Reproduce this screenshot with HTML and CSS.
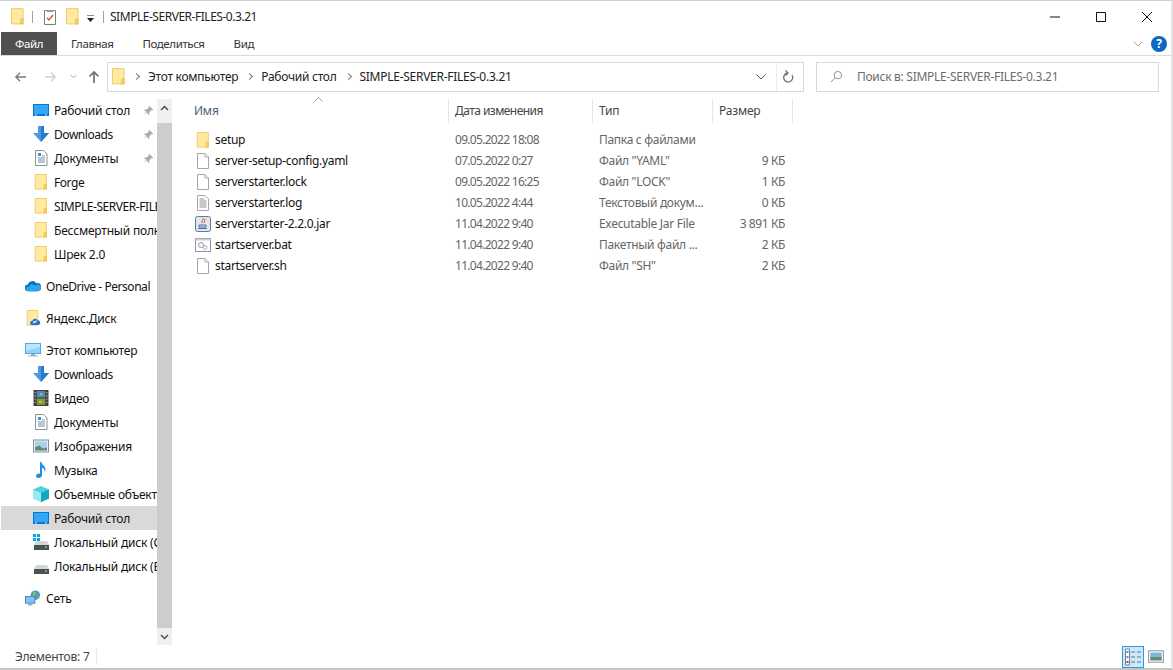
FILE: index.html
```html
<!DOCTYPE html>
<html>
    <head>
        <title>SIMPLE-SERVER-FILES-0.3.21</title>
        <meta charset="UTF-8">
        <link rel="stylesheet" href="styles.css">
    </head>
    <body>
        <svg class="defs" width="0" height="0">
            <symbol id="folder" viewBox="0 0 14 18">
                <path d="M.5.5h12.500v16.500H.5z" fill="#ffe9a3" stroke="#eec95c"/>
                <path d="M10.500 11.500h2.500v5.500h-2.500z" fill="#ffd766" stroke="#e8bd4e"/>
            </symbol>
            <symbol id="desktop" viewBox="0 0 16 12">
                <rect width="16" height="12" fill="#0078d7"/>
                <rect x="1" y="1" width="14" height="9" fill="#36a6f3"/>
                <rect x="2" y="10.500" width="2" height="1" fill="#d5ecfc"/>
                <rect x="12" y="10.500" width="2" height="1" fill="#d5ecfc"/>
            </symbol>
            <symbol id="down" viewBox="0 0 16 16">
                <path d="M5 0h6v7h5l-8 9-8-9h5z" fill="#4a9ae6"/>
                <path d="M8 0h3v7h5l-8 9z" fill="#2a78c8"/>
            </symbol>
            <symbol id="docs" viewBox="0 0 14 16">
                <path d="M1.500.5h8l3.500 3.500v11.500H1.500z" fill="#fff" stroke="#8a9096"/>
                <path d="M4 3h3v3H4z" fill="#3a8fd8"/>
                <path d="M8 6h3M4 8h7M4 10h7M4 12h7" stroke="#6f8fa8"/>
            </symbol>
            <symbol id="pin" viewBox="0 0 12 12">
                <path d="M7 1l4 4-1 1-1-.3L7 8v2L6 11 4 8 1 11l2.500-4L1 6l1-1h2l2.300-2.200L6 2z" fill="#a6acb3"/>
            </symbol>
            <symbol id="cloud" viewBox="0 0 17 11">
                <path d="M3.500 11A3.500 3.500 0 0 1 3 4a5 5 0 0 1 9-1.500A4 4 0 0 1 14 11z" fill="#0f6cbd"/>
                <path d="M3 11a2.500 2.500 0 0 1 1-5 4 4 0 0 1 7-.5A3 3 0 0 1 16.500 9 3 3 0 0 1 14 11z" fill="#28a8ea"/>
            </symbol>
            <symbol id="yadisk" viewBox="0 0 14 18">
                <path d="M.5.5h12v16.500H.5z" fill="#ffe9a3" stroke="#eec95c"/>
                <path d="M6 17a2.500 2.500 0 0 1 .5-5 3 3 0 0 1 5.500-.5 2.800 2.800 0 0 1 1 5.500z" fill="#1f6fc4"/>
                <path d="M8 15.500a1.500 1.500 0 0 1 1-3 2 2 0 0 1 3 .5z" fill="#bcdcf7"/>
            </symbol>
            <symbol id="pc" viewBox="0 0 16 14">
                <rect x=".5" y=".5" width="15" height="10" fill="#8fd3f8" stroke="#5aa7d6"/>
                <path d="M1 1h14v3L1 8z" fill="#b9e6fb"/>
                <path d="M6 11h4v1.500H6zM3 12.500h10v1H3z" fill="#9fb2c0"/>
            </symbol>
            <symbol id="video" viewBox="0 0 14 15">
                <rect width="14" height="15" fill="#3d3d3d"/>
                <rect x="3" y="1" width="8" height="6" fill="#4d8fc4"/>
                <rect x="3" y="8" width="8" height="6" fill="#7f9a3c"/>
                <path d="M6 3h2v2H6zM5 10h3v2H5z" fill="#e3b23c"/>
                <path d="M1 2h1v1H1zM1 5h1v1H1zM1 8h1v1H1zM1 11h1v1H1zM12 2h1v1h-1zM12 5h1v1h-1zM12 8h1v1h-1zM12 11h1v1h-1z" fill="#ddd"/>
            </symbol>
            <symbol id="pics" viewBox="0 0 16 13">
                <rect x=".5" y=".5" width="15" height="12" fill="#e9f2f8" stroke="#7f8f9c"/>
                <rect x="2" y="2" width="12" height="9" fill="#a9cfe8"/>
                <path d="M2 11V8l4-2 4 3 4-1v3z" fill="#5f8a78"/>
            </symbol>
            <symbol id="music" viewBox="0 0 10 16">
                <path d="M4 0h1.500c0 3 4 3.500 4 7.500 0 1-.3 1.800-.8 2.500.2-3-1.700-4.200-2.700-4.500V13c0 1.700-1.500 3-3.300 3C1 16 0 15.200 0 14c0-1.500 1.500-2.600 3-2.600.4 0 .7 0 1 .2z" fill="#1e90e6"/>
            </symbol>
            <symbol id="cube" viewBox="0 0 16 16">
                <path d="M8 0l8 3.500v9L8 16 0 12.500v-9z" fill="#4fd0dc"/>
                <path d="M8 7l8-3.500v9L8 16z" fill="#12a5bd"/>
                <path d="M0 3.500L8 7v9L0 12.500z" fill="#9ceaf0"/>
            </symbol>
            <symbol id="drive" viewBox="0 0 15 9">
                <path d="M2 0h11l2 4v5H0V4z" fill="#d5d7d9"/>
                <rect y="4" width="15" height="5" fill="#4d5156"/>
                <rect x="11" y="5.500" width="2" height="1.500" fill="#5fd35f"/>
            </symbol>
            <symbol id="win" viewBox="0 0 7 7">
                <path d="M0 0h3v3H0zM4 0h3v3H4zM0 4h3v3H0zM4 4h3v3H4z" fill="#00a4ef"/>
            </symbol>
            <symbol id="net" viewBox="0 0 17 16">
                <circle cx="11" cy="5" r="5" fill="#4c93c9"/>
                <path d="M9 1l3 1-1 3-3 1zM13 5l2 1-2 3z" fill="#8cc063"/>
                <rect x=".5" y="6.500" width="10" height="7" fill="#7cc7f2" stroke="#3f86bd"/>
                <path d="M4 14h3v1H4zM3 15h5v1H3z" fill="#8ba3b5"/>
            </symbol>
            <symbol id="file" viewBox="0 0 12 16">
                <path d="M.5.500h7.500l3.500 3.500v11.500H.500z" fill="#fff" stroke="#a3a7ab"/>
                <path d="M8 .5V4h3.500" fill="#f2f2f2" stroke="#a3a7ab"/>
            </symbol>
            <symbol id="textfile" viewBox="0 0 12 16">
                <path d="M.5.500h7.500l3.500 3.500v11.500H.500z" fill="#fff" stroke="#a3a7ab"/>
                <path d="M2.500 4h5M2.500 6h7M2.500 8h7M2.500 10h7M2.500 12h7" stroke="#8e9398"/>
            </symbol>
            <symbol id="jar" viewBox="0 0 16 16">
                <rect x=".5" y=".5" width="15" height="15" rx="2" fill="#dfe6ef" stroke="#5b7a9e"/>
                <path d="M8 2c1 2-2 3-1 5M10 3c0 2-1 2-1 4" stroke="#d9531e" fill="none"/>
                <path d="M4 9h7v2H4zM3 12.500h9" stroke="#4a6fa5" fill="none"/>
            </symbol>
            <symbol id="bat" viewBox="0 0 16 14">
                <rect x=".5" y=".5" width="15" height="13" fill="#fff" stroke="#8d9399"/>
                <rect x=".5" y=".5" width="15" height="2" fill="#c9ced3"/>
                <circle cx="6" cy="7" r="2.500" fill="none" stroke="#8d9ba8"/>
                <circle cx="10" cy="9.500" r="2" fill="none" stroke="#a9b3bc"/>
            </symbol>
            <symbol id="checkdoc" viewBox="0 0 12 16">
                <path d="M.5 1.500h11v14H.5z" fill="#fff" stroke="#7d7d7d"/>
                <path d="M3 1h6v2H3z" fill="#9a9a9a"/>
                <path d="M3 9l2 2 4-5" fill="none" stroke="#d9501e" stroke-width="1.300"/>
            </symbol>
        </svg>

        <div class="window">
            <div class="titlebar">
                <svg class="ico-folder"><use href="#folder"/></svg>
                <span class="qa-sep"></span>
                <svg class="ico-check"><use href="#checkdoc"/></svg>
                <svg class="ico-folder"><use href="#folder"/></svg>
                <svg class="qa-menu" viewBox="0 0 9 7"><path d="M1 0h7" stroke="#222"/><path d="M1 3h7L4.500 7z" fill="#222"/></svg>
                <span class="qa-sep qa-sep-last"></span>
                <span class="title-text">SIMPLE-SERVER-FILES-0.3.21</span>
                <div class="win-buttons">
                    <svg viewBox="0 0 12 12"><path d="M1 6h10" stroke="#111"/></svg>
                    <svg viewBox="0 0 12 12"><path d="M1.500 1.500h9v9h-9z" fill="none" stroke="#111"/></svg>
                    <svg viewBox="0 0 12 12"><path d="M1 1l10 10M11 1L1 11" stroke="#111"/></svg>
                </div>
            </div>

            <div class="ribbon">
                <a class="tab tab-file">Файл</a>
                <a class="tab tab-home">Главная</a>
                <a class="tab tab-share">Поделиться</a>
                <a class="tab tab-view">Вид</a>
                <svg class="ribbon-chevron" viewBox="0 0 10 6"><path d="M.5.5L5 5 9.500.5" fill="none" stroke="#a8a8a8"/></svg>
                <span class="help">?</span>
            </div>

            <div class="navbar">
                <svg class="nav-arrow" viewBox="0 0 14 12"><path d="M13 6H2M6.500 1.500L2 6l4.500 4.500" fill="none" stroke="#7a7a7a" stroke-width="1.500"/></svg>
                <svg class="nav-arrow nav-off" viewBox="0 0 14 12"><path d="M1 6h11M7.500 1.500L12 6l-4.500 4.500" fill="none" stroke="#d0d0d0" stroke-width="1.500"/></svg>
                <svg class="nav-recent" viewBox="0 0 8 5"><path d="M.5.500L4 4 7.500.500" fill="none" stroke="#9a9a9a"/></svg>
                <svg class="nav-up" viewBox="0 0 12 14"><path d="M6 13V2M1.500 6.500L6 2l4.500 4.500" fill="none" stroke="#6f6f6f" stroke-width="1.700"/></svg>
                <div class="address">
                    <svg class="ico-folder"><use href="#folder"/></svg>
                    <span class="crumb-sep"></span>
                    <span class="crumb">Этот компьютер</span>
                    <span class="crumb-sep"></span>
                    <span class="crumb">Рабочий стол</span>
                    <span class="crumb-sep"></span>
                    <span class="crumb">SIMPLE-SERVER-FILES-0.3.21</span>
                    <svg class="addr-drop" viewBox="0 0 10 6"><path d="M.5.500L5 5 9.500.500" fill="none" stroke="#555"/></svg>
                    <span class="addr-div"></span>
                    <svg class="addr-refresh" viewBox="0 0 12 13"><path d="M10 5A4.500 4.500 0 1 1 5.500 3" fill="none" stroke="#707070" stroke-width="1.300"/><path d="M3.500 .5L6 3 3.500 5.500" fill="none" stroke="#707070" stroke-width="1.300"/></svg>
                </div>
                <div class="search">
                    <svg viewBox="0 0 14 14"><circle cx="8.500" cy="5.500" r="4" fill="none" stroke="#8a8a8a"/><path d="M5.500 8.500L1 13" stroke="#8a8a8a"/></svg>
                    <span>Поиск в: SIMPLE-SERVER-FILES-0.3.21</span>
                </div>
            </div>

            <div class="main">
                <nav class="sidebar">
                    <ul class="tree">
                        <li><svg class="i16x12"><use href="#desktop"/></svg><span>Рабочий стол</span><svg class="pin"><use href="#pin"/></svg></li>
                        <li><svg class="i16"><use href="#down"/></svg><span class="latin">Downloads</span><svg class="pin"><use href="#pin"/></svg></li>
                        <li><svg class="i16"><use href="#docs"/></svg><span>Документы</span><svg class="pin"><use href="#pin"/></svg></li>
                        <li><svg class="i16"><use href="#folder"/></svg><span class="latin">Forge</span></li>
                        <li><svg class="i16"><use href="#folder"/></svg><span class="latin">SIMPLE-SERVER-FILES-0.3.21</span></li>
                        <li><svg class="i16"><use href="#folder"/></svg><span>Бессмертный полк</span></li>
                        <li><svg class="i16"><use href="#folder"/></svg><span>Шрек 2.0</span></li>
                        <li class="root gap"><svg class="i16"><use href="#cloud"/></svg><span class="latin">OneDrive - Personal</span></li>
                        <li class="root gap"><svg class="i16"><use href="#yadisk"/></svg><span>Яндекс.Диск</span></li>
                        <li class="root gap"><svg class="i16"><use href="#pc"/></svg><span>Этот компьютер</span></li>
                        <li><svg class="i16"><use href="#down"/></svg><span class="latin">Downloads</span></li>
                        <li><svg class="i16"><use href="#video"/></svg><span>Видео</span></li>
                        <li><svg class="i16"><use href="#docs"/></svg><span>Документы</span></li>
                        <li><svg class="i16"><use href="#pics"/></svg><span>Изображения</span></li>
                        <li><svg class="i16"><use href="#music"/></svg><span>Музыка</span></li>
                        <li><svg class="i16"><use href="#cube"/></svg><span>Объемные объекты</span></li>
                        <li class="selected"><svg class="i16x12"><use href="#desktop"/></svg><span>Рабочий стол</span></li>
                        <li><span class="drive-ico"><svg class="win-flag"><use href="#win"/></svg><svg class="drive"><use href="#drive"/></svg></span><span>Локальный диск (C:)</span></li>
                        <li><span class="drive-ico"><svg class="drive"><use href="#drive"/></svg></span><span>Локальный диск (E:)</span></li>
                        <li class="root gap"><svg class="i16"><use href="#net"/></svg><span>Сеть</span></li>
                    </ul>
                </nav>

                <div class="scrollbar">
                    <button class="scroll-btn"><svg viewBox="0 0 9 6"><path d="M1 5l3.500-3.500L8 5" fill="none" stroke="#505050" stroke-width="1.500"/></svg></button>
                    <div class="scroll-thumb"></div>
                    <button class="scroll-btn"><svg viewBox="0 0 9 6"><path d="M1 1l3.500 3.500L8 1" fill="none" stroke="#505050" stroke-width="1.500"/></svg></button>
                </div>

                <div class="files">
                    <div class="file-head">
                        <svg class="sort-mark" viewBox="0 0 9 5"><path d="M.5 4.500L4.500.5l4 4" fill="none" stroke="#9a9a9a"/></svg>
                        <div class="col-name">Имя</div>
                        <div class="col-date">Дата изменения</div>
                        <div class="col-type">Тип</div>
                        <div class="col-size">Размер</div>
                    </div>
                    <div class="file-row">
                        <div class="col-name"><svg class="i16"><use href="#folder"/></svg><span>setup</span></div>
                        <div class="col-date">09.05.2022 18:08</div>
                        <div class="col-type">Папка с файлами</div>
                        <div class="col-size"></div>
                    </div>
                    <div class="file-row">
                        <div class="col-name"><svg class="i16"><use href="#file"/></svg><span>server-setup-config.yaml</span></div>
                        <div class="col-date">07.05.2022 0:27</div>
                        <div class="col-type">Файл "YAML"</div>
                        <div class="col-size">9 КБ</div>
                    </div>
                    <div class="file-row">
                        <div class="col-name"><svg class="i16"><use href="#file"/></svg><span>serverstarter.lock</span></div>
                        <div class="col-date">09.05.2022 16:25</div>
                        <div class="col-type">Файл "LOCK"</div>
                        <div class="col-size">1 КБ</div>
                    </div>
                    <div class="file-row">
                        <div class="col-name"><svg class="i16"><use href="#textfile"/></svg><span>serverstarter.log</span></div>
                        <div class="col-date">10.05.2022 4:44</div>
                        <div class="col-type">Текстовый докум...</div>
                        <div class="col-size">0 КБ</div>
                    </div>
                    <div class="file-row">
                        <div class="col-name"><svg class="i16"><use href="#jar"/></svg><span>serverstarter-2.2.0.jar</span></div>
                        <div class="col-date">11.04.2022 9:40</div>
                        <div class="col-type">Executable Jar File</div>
                        <div class="col-size">3 891 КБ</div>
                    </div>
                    <div class="file-row">
                        <div class="col-name"><svg class="i16"><use href="#bat"/></svg><span>startserver.bat</span></div>
                        <div class="col-date">11.04.2022 9:40</div>
                        <div class="col-type">Пакетный файл ...</div>
                        <div class="col-size">2 КБ</div>
                    </div>
                    <div class="file-row">
                        <div class="col-name"><svg class="i16"><use href="#file"/></svg><span>startserver.sh</span></div>
                        <div class="col-date">11.04.2022 9:40</div>
                        <div class="col-type">Файл "SH"</div>
                        <div class="col-size">2 КБ</div>
                    </div>
                </div>
            </div>

            <div class="statusbar">
                <span class="status-count">Элементов: 7</span>
                <div class="view-btns">
                    <span class="view-btn view-on">
                        <svg viewBox="0 0 16 18"><path d="M.5 1h4v16h-4z" fill="#fff" stroke="#808080"/><path d="M1.500 3h2v2h-2z" fill="#4a90d0"/><path d="M1.500 8h2v2h-2z" fill="#4a90d0"/><path d="M1.500 13h2v2h-2z" fill="#c0392b"/><path d="M6 4h4M12 4h4M6 9h4M12 9h4M6 14h4M12 14h4" stroke="#707070"/></svg>
                    </span>
                    <span class="view-btn">
                        <svg viewBox="0 0 14 11"><rect x=".5" y=".5" width="13" height="10" fill="#fff" stroke="#a0a0a0"/><rect x="2" y="2" width="10" height="4" fill="#7ab8dc"/><rect x="2" y="6" width="10" height="3" fill="#5f8a78"/></svg>
                    </span>
                </div>
            </div>
        </div>
    </body>
</html>
```

FILE: styles.css
```css
* {
    box-sizing: border-box;
}
html, body {
    margin: 0;
    height: 100%;
    background-color: white;
    overflow: hidden;
}
body {
    font-family: "Noto Sans", "Open Sans", sans-serif;
    font-size: 12px;
    letter-spacing: -0.2px;
    color: #1a1a1a;
}
.defs {
    position: absolute;
}
.window {
    height: 670px;
    display: flex;
    flex-direction: column;
    border-top: 1px solid #d0d0d0;
    border-right: 2px solid #e4e4e4;
    border-bottom: 2px solid #c4c4c4;
}

/* title bar */
.titlebar {
    height: 31px;
    flex: none;
    display: flex;
    align-items: center;
    padding-left: 11px;
}
.ico-folder {
    width: 13px;
    height: 17px;
}
.ico-check {
    width: 12px;
    height: 16px;
    margin-right: 10px;
}
.qa-sep {
    width: 1px;
    height: 12px;
    background-color: #a0a0a0;
    margin: 0 11px 0 8px;
}
.qa-menu {
    width: 9px;
    height: 7px;
    margin-left: 7px;
    margin-top: 3px;
}
.qa-sep-last {
    margin: 0 6px 0 8px;
}
.title-text {
    letter-spacing: -0.47px;
    color: #222;
}
.win-buttons {
    margin-left: auto;
    display: flex;
    gap: 34px;
    padding-right: 18px;
}
.win-buttons svg {
    width: 12px;
    height: 12px;
}

/* ribbon */
.ribbon {
    height: 24px;
    flex: none;
    display: flex;
    align-items: center;
    border-bottom: 1px solid #dadada;
    padding-left: 1px;
}
.tab {
    height: 23px;
    line-height: 23px;
    color: #333;
    font-size: 11.500px;
    letter-spacing: -0.4px;
}
.tab-file {
    width: 56px;
    background-color: #505050;
    color: white;
    text-align: center;
}
.tab-home {
    margin-left: 14px;
}
.tab-share {
    margin-left: 29px;
}
.tab-view {
    margin-left: 29px;
}
.ribbon-chevron {
    width: 10px;
    height: 6px;
    margin-left: auto;
}
.help {
    width: 16px;
    height: 16px;
    margin: 0 4px 0 8px;
    border-radius: 50%;
    background-color: #0f68bf;
    color: white;
    font-weight: bold;
    font-size: 12px;
    line-height: 16px;
    text-align: center;
}

/* address row */
.navbar {
    height: 41px;
    flex: none;
    display: flex;
    align-items: center;
    padding-left: 14px;
}
.nav-arrow {
    width: 13px;
    height: 12px;
    margin-right: 17px;
}
.nav-recent {
    width: 7px;
    height: 5px;
    margin: 0 11px 0 -4px;
}
.nav-up {
    width: 12px;
    height: 14px;
    margin-right: 7px;
}
.address {
    width: 697px;
    height: 30px;
    display: flex;
    align-items: center;
    border: 1px solid #d9d9d9;
    padding-left: 4px;
    color: #222;
    letter-spacing: -0.27px;
}
.crumb-sep {
    width: 5px;
    height: 5px;
    border-top: 1.500px solid #777;
    border-right: 1.500px solid #777;
    transform: rotate(45deg);
    margin: 0 9px;
}
.addr-drop {
    width: 10px;
    height: 6px;
    margin-left: auto;
    margin-right: 10px;
}
.addr-div {
    width: 1px;
    height: 100%;
    background-color: #ececec;
    margin-right: 5px;
}
.addr-refresh {
    width: 12px;
    height: 13px;
    margin-right: 9px;
}
.search {
    width: 343px;
    height: 30px;
    margin-left: 12px;
    display: flex;
    align-items: center;
    border: 1px solid #d9d9d9;
    padding-left: 13px;
    color: #6d6d6d;
    letter-spacing: -0.28px;
}
.search svg {
    width: 13px;
    height: 13px;
    margin-right: 14px;
}

/* main area */
.main {
    flex: 1;
    min-height: 0;
    display: flex;
    padding-top: 2px;
}
.sidebar {
    width: 157px;
    flex: none;
    margin-top: -1px;
    overflow: hidden;
}
.tree {
    list-style: none;
    margin: 0;
    padding: 0;
}
.tree li {
    height: 24px;
    display: flex;
    align-items: center;
    padding-left: 32px;
    margin-left: 1px;
    white-space: nowrap;
    color: #111;
    position: relative;
}
.tree li span {
    margin-left: 5px;
    overflow: hidden;
    flex: 1;
}
.tree li span.latin {
    letter-spacing: -0.45px;
}
.tree li.root {
    padding-left: 24px;
}
.tree li.gap {
    margin-top: 8px;
}
.tree li.selected {
    background-color: #d9d9d9;
}
.i16 {
    width: 16px;
    height: 16px;
    flex: none;
}
.i16x12 {
    width: 16px;
    height: 12px;
    flex: none;
}
.pin {
    position: absolute;
    right: 3px;
    top: 7px;
    width: 11px;
    height: 11px;
}
.tree li span.drive-ico {
    width: 16px;
    height: 16px;
    flex: none;
    margin: 0;
    position: relative;
}
.drive {
    position: absolute;
    left: 1px;
    bottom: 0;
    width: 15px;
    height: 9px;
}
.win-flag {
    position: absolute;
    left: 0;
    top: 0;
    width: 7px;
    height: 7px;
}
.scrollbar {
    width: 15px;
    flex: none;
    display: flex;
    flex-direction: column;
    background-color: #f0f0f0;
}
.scroll-btn {
    height: 17px;
    flex: none;
    border: 0;
    padding: 0;
    background-color: #f0f0f0;
    display: flex;
    align-items: center;
    justify-content: center;
}
.scroll-btn svg {
    width: 9px;
    height: 6px;
}
.scroll-thumb {
    flex: 1;
    background-color: #cdcdcd;
    margin-top: 7px;
}
.files {
    flex: 1;
    padding-left: 15px;
}
.file-head, .file-row {
    display: grid;
    grid-template-columns: 262px 144px 120px 80px;
    width: 606px;
}
.file-head {
    height: 24px;
    margin-bottom: 6px;
    position: relative;
    color: #444;
}
.file-head > div {
    border-right: 1px solid #e5e5e5;
    line-height: 24px;
    padding-left: 6px;
}
.file-head .col-name {
    padding-left: 7px;
    color: #4c607a;
}
.file-head .col-date {
    letter-spacing: -0.55px;
}
.sort-mark {
    position: absolute;
    left: 127px;
    top: -2px;
    width: 9px;
    height: 5px;
}
.file-row {
    height: 21px;
    line-height: 21px;
    color: #666;
}
.file-row .col-name {
    display: flex;
    align-items: center;
    padding-left: 8px;
    color: #111;
    gap: 4px;
    letter-spacing: -0.3px;
}
.file-row .col-date {
    padding-left: 6px;
    letter-spacing: -0.7px;
}
.file-row .col-type {
    padding-left: 6px;
    letter-spacing: -0.3px;
}
.file-row .col-size {
    text-align: right;
    padding-right: 8px;
    letter-spacing: -0.4px;
}

/* status bar */
.statusbar {
    height: 23px;
    flex: none;
    display: flex;
    align-items: center;
    padding-left: 15px;
    color: #444;
}
.status-count {
    width: 82px;
    border-right: 1px solid #e8e8e8;
    line-height: 16px;
}
.view-btns {
    margin-left: auto;
    display: flex;
    align-items: center;
    gap: 1px;
    padding-right: 4px;
}
.view-btn {
    width: 22px;
    height: 22px;
    display: flex;
    align-items: center;
    justify-content: center;
    border: 1px solid transparent;
}
.view-btn svg {
    width: 16px;
    height: 13px;
}
.view-on {
    background-color: #cce8ff;
    border-color: #26a0da;
}
.view-on svg {
    height: 18px;
}
```
